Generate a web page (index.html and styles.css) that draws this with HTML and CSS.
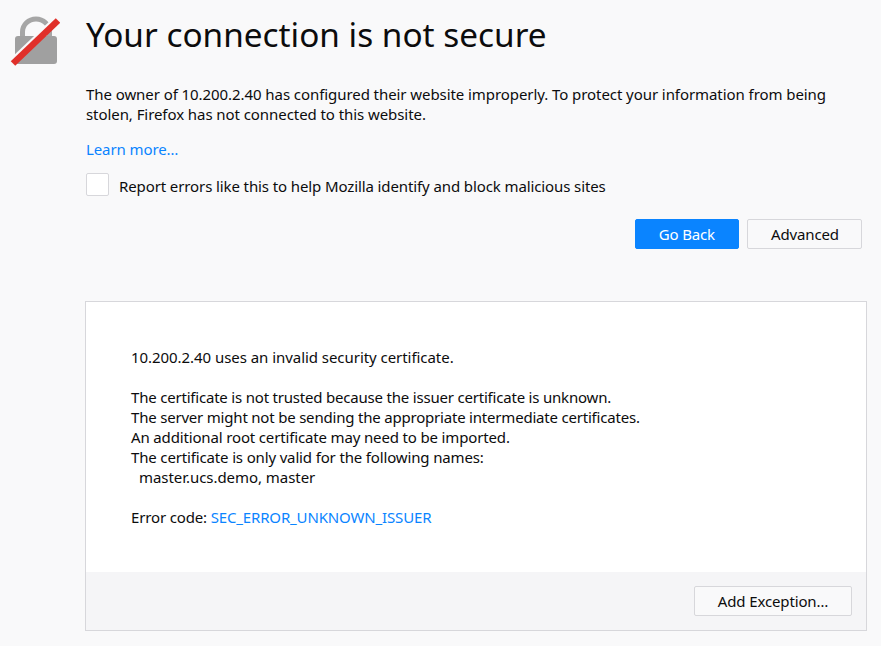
FILE: index.html
```html
<!DOCTYPE html>
<html lang="en">
<head>
<meta charset="utf-8">
<title>Insecure Connection</title>
<link rel="stylesheet" href="styles.css">
</head>
<body>
<main class="page">
  <div class="intro">
    <svg class="lock" viewBox="10 15 50 52" aria-hidden="true">
      <path class="shackle" d="M22.500 38V32a13.500 13 0 0 1 27 0v6"/>
      <rect class="lock-body" x="15" y="36" width="42" height="28" rx="3"/>
      <path class="slash-halo" d="M10.500 61L55.500 18"/>
      <path class="slash" d="M13 63.500L58 20.500"/>
    </svg>
    <div class="intro-text">
      <h1 class="title">Your connection is not secure</h1>
      <p class="desc">The owner of 10.200.2.40 has configured their website improperly. To protect your information from being stolen, Firefox has not connected to this website.</p>
      <p class="learn"><a class="link" href="#">Learn more…</a></p>
      <label class="report"><span class="checkbox"></span><span class="report-text">Report errors like this to help Mozilla identify and block malicious sites</span></label>
      <div class="actions">
        <button class="btn btn-primary">Go Back</button>
        <button class="btn btn-advanced">Advanced</button>
      </div>
    </div>
  </div>
  <section class="panel">
    <div class="panel-body">
      <p class="line tight-1">10.200.2.40 uses an invalid security certificate.</p>
      <p class="line gap tight-3">The certificate is not trusted because the issuer certificate is unknown.</p>
      <p class="line tight-3">The server might not be sending the appropriate intermediate certificates.</p>
      <p class="line tight-2">An additional root certificate may need to be imported.</p>
      <p class="line tight-2">The certificate is only valid for the following names:</p>
      <p class="line indent tight-1">master.ucs.demo, master</p>
      <p class="line gap tight-2">Error code: <a class="link" href="#">SEC_ERROR_UNKNOWN_ISSUER</a></p>
    </div>
    <div class="panel-foot"><button class="btn btn-wide">Add Exception…</button></div>
  </section>
</main>
</body>
</html>
```
FILE: styles.css
```css
* { box-sizing: border-box; }
html, body { margin: 0; height: 100%; overflow: hidden; }
body {
  background: #f9f9fa;
  color: #0c0c0d;
  font: 15px/20px "Noto Sans", sans-serif;
}
.page { padding: 0 14px 0 10px; }
.intro { display: flex; }
.lock { flex: none; margin-top: 15px; width: 50px; height: 52px; }
.shackle { fill: none; stroke: #a6a6a6; stroke-width: 5; }
.lock-body { fill: #a0a0a0; }
.slash-halo { stroke: #f9f9fa; stroke-width: 3.500; fill: none; }
.slash { stroke: #e0302a; stroke-width: 6.500; fill: none; }
.intro-text { flex: 1; margin: 0 5px 0 26px; min-width: 0; }
.title { margin: 0; padding-top: 11px; font-size: 33.350px; line-height: 46px; font-weight: 400; }
.desc { margin: 27px 0 0; letter-spacing: -0.07px; }
.learn { margin: 15px 0 0; letter-spacing: -0.1px; }
.link { color: #0a84ff; text-decoration: none; }
.report { display: flex; align-items: center; gap: 10px; margin-top: 14px; }
.report-text { padding-top: 2px; letter-spacing: -0.107px; }
.checkbox { flex: none; width: 23px; height: 23px; background: #fff; border: 1px solid #d7d7db; border-radius: 2px; }
.actions { display: flex; justify-content: flex-end; gap: 8px; margin-top: 23px; }
.btn {
  height: 30px; min-width: 104px; padding: 0 23px;
  font: inherit; color: inherit; white-space: nowrap; letter-spacing: -0.13px;
  background: #f9f9fa; border: 1px solid #d7d7db; border-radius: 2px;
}
.btn-primary { background: #0a84ff; border-color: #0a84ff; color: #fff; }
.btn-advanced { width: 115px; }
.btn-wide { width: 158px; padding: 0; }
.panel { margin: 52px 0 0 75px; background: #fff; border: 1px solid #d7d7db; }
.panel-body { padding: 45px 45px 44px; height: 270px; }
.line { margin: 0; }
.tight-1 { letter-spacing: -0.05px; }
.tight-2 { letter-spacing: -0.15px; }
.tight-3 { letter-spacing: -0.2px; }
.gap { margin-top: 20px; }
.indent { padding-left: 8px; }
.panel-foot { display: flex; justify-content: flex-end; height: 58px; padding: 14px 14px; background: #f5f5f7; }
```
